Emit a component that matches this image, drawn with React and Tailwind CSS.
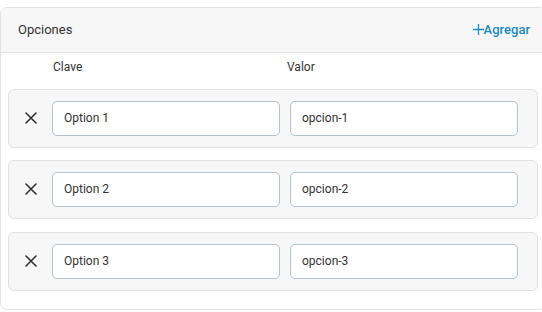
import React from "react";

const rows = [
  { k: "Option 1", v: "opcion-1" },
  { k: "Option 2", v: "opcion-2" },
  { k: "Option 3", v: "opcion-3" },
];

function XIcon() {
  return (
    <svg width="12" height="12" viewBox="0 0 12 12" fill="none" stroke="#2b2b2b" strokeWidth="1.5" strokeLinecap="round">
      <path d="M1 1 L11 11 M11 1 L1 11" />
    </svg>
  );
}

export default function App() {
  return (
    <div className="w-[542px] h-[312px] overflow-hidden bg-white pt-[7px]" style={{ fontFamily: "Roboto, 'Liberation Sans', sans-serif" }}>
      <div className="w-[546px] border border-[#e2e2e2] rounded-[7px] bg-white pb-[18px] text-[#333]">
        <div className="h-[45px] flex items-center justify-between pl-[17px] pr-[15px] bg-[#f7f7f7] border-b border-[#e2e2e2] rounded-t-[7px]">
          <span className="text-[13px] leading-none -mt-[2px]">Opciones</span>
          <span className="flex items-center text-[13px] leading-none font-medium text-[#1a88c9] -mt-[2px]">
            <svg width="11" height="11" viewBox="0 0 11 11" fill="none" stroke="#1a88c9" strokeWidth="1.3">
              <path d="M5.5 0 V11 M0 5.5 H11" />
            </svg>
            <span>Agregar</span>
          </span>
        </div>
        <div className="h-[36px] flex items-start pt-[7px] text-[12px] leading-[14px]">
          <span className="ml-[52px] w-[234px]">Clave</span>
          <span>Valor</span>
        </div>
        <div className="flex flex-col gap-[12px] px-[7px]">
          {rows.map((r, i) => (
            <div key={r.k} className={"flex items-center h-[59px] border border-[#e2e2e2] rounded-[6px] bg-[#f7f7f7]" + (i === 2 ? " mt-[1px]" : "")}>
              <div className="w-[43px] flex items-center justify-center -mt-[2px]">
                <XIcon />
              </div>
              <div className="w-[228px] h-[35px] flex items-center pl-[11px] pb-[1px] bg-white border border-[#b4c2cc] rounded-[5px] text-[12px]">
                {r.k}
              </div>
              <div className="w-[228px] h-[35px] ml-[10px] flex items-center pl-[11px] pb-[1px] bg-white border border-[#b4c2cc] rounded-[5px] text-[12px]">
                {r.v}
              </div>
            </div>
          ))}
        </div>
      </div>
    </div>
  );
}
